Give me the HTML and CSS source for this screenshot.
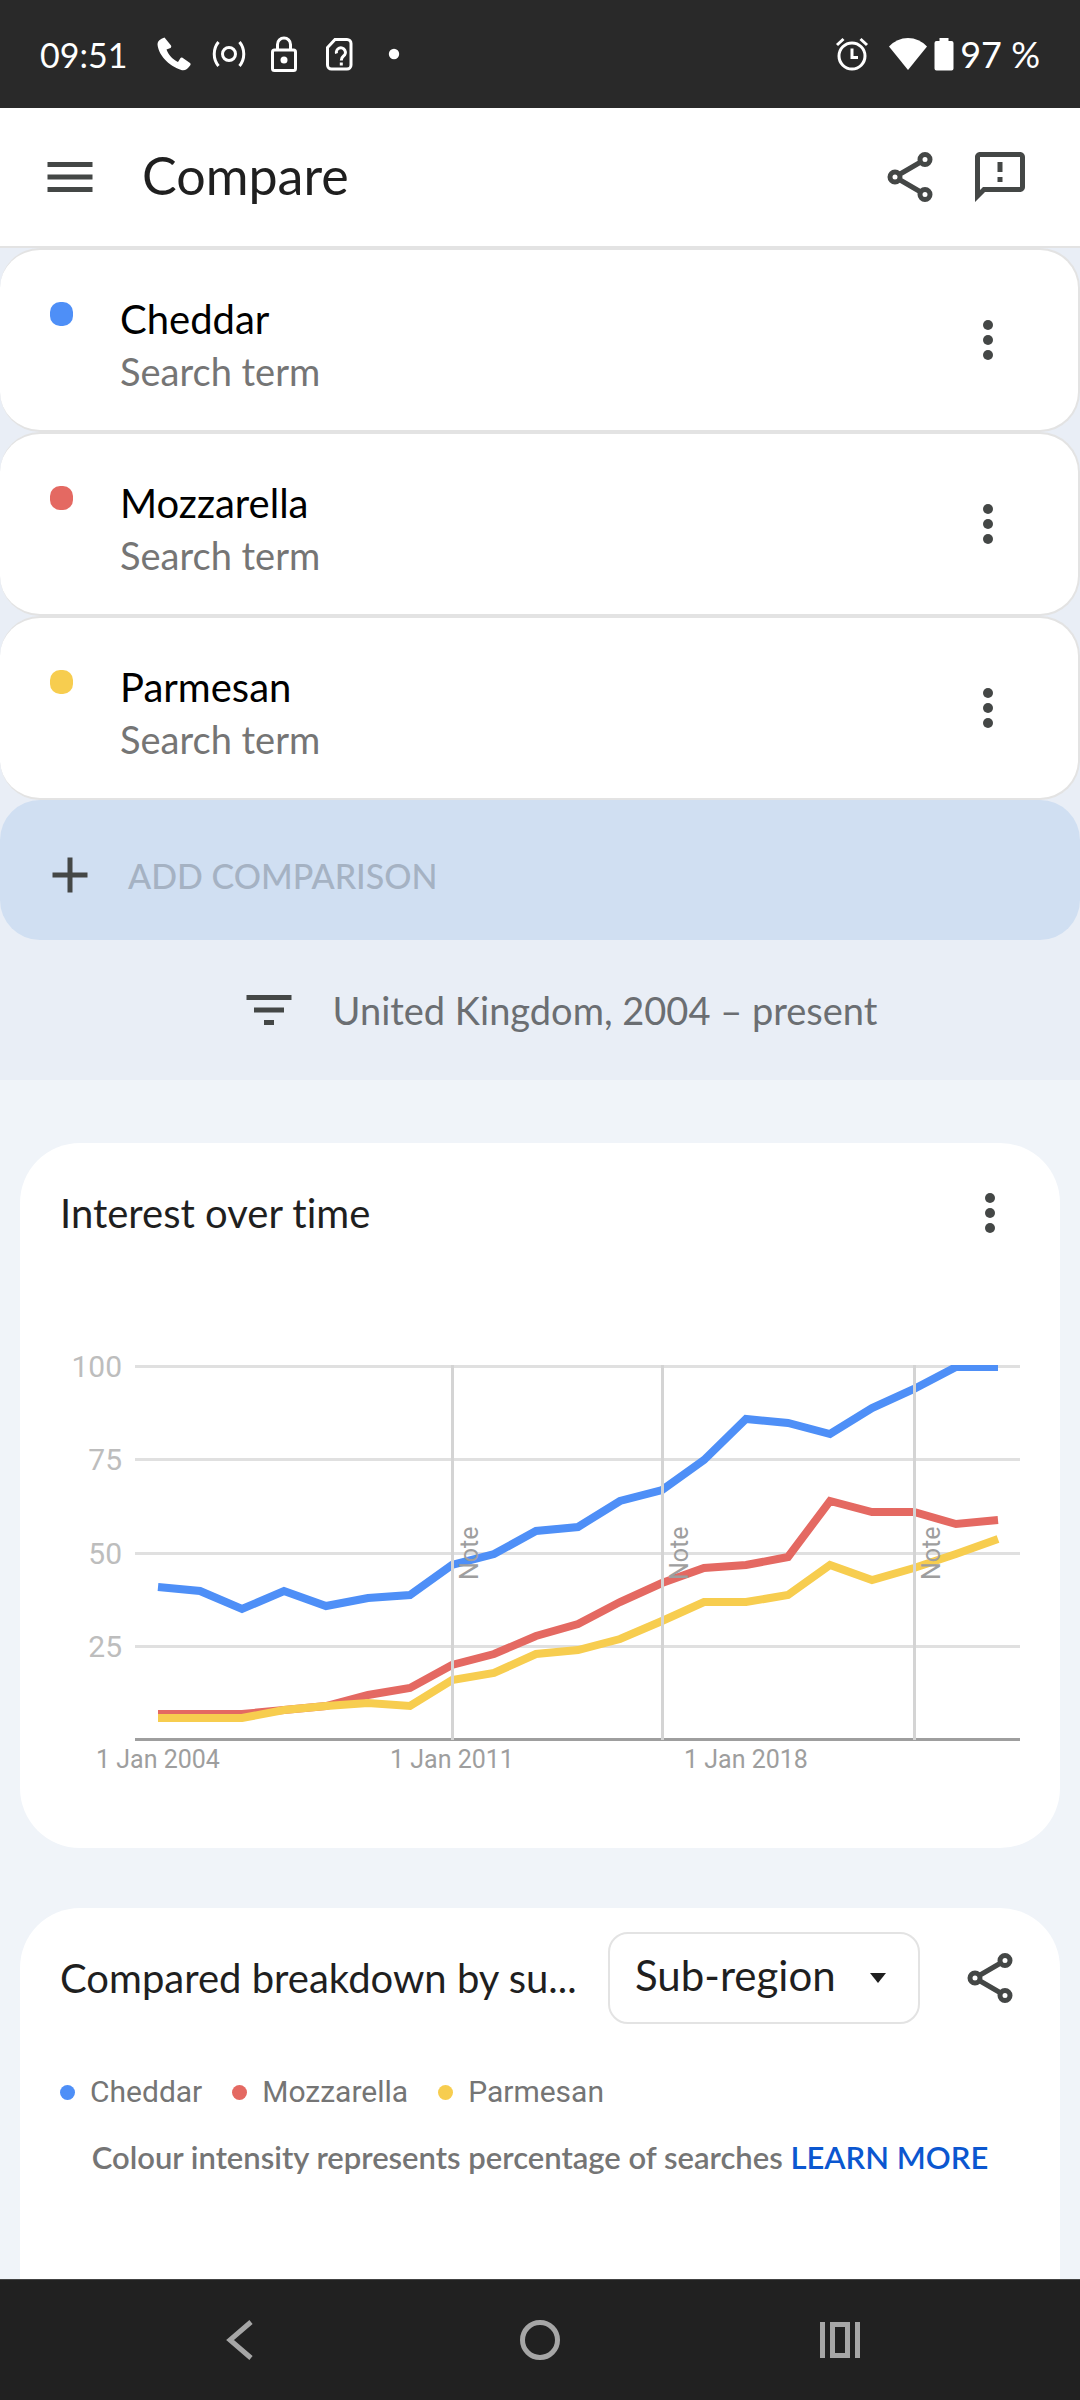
FILE: index.html
```html
<!DOCTYPE html>
<html lang="en-GB">
<head>
<meta charset="utf-8">
<meta name="viewport" content="width=device-width, initial-scale=1">
<title>Compare</title>
<link rel="stylesheet" href="styles.css">
</head>
<body>
<svg class="sprite" aria-hidden="true">
  <symbol id="more" viewBox="0 0 24 24"><circle cx="12" cy="6" r="2"/><circle cx="12" cy="12" r="2"/><circle cx="12" cy="18" r="2"/></symbol>
  <symbol id="share" viewBox="0 0 24 24"><g fill="none" stroke="currentColor" stroke-width="2"><circle cx="18" cy="5" r="2"/><circle cx="6" cy="12" r="2"/><circle cx="18" cy="19" r="2"/><path d="M7.700 11L16.300 6M7.700 13L16.300 18"/></g></symbol>
</svg>

<div class="status">
  <span class="status-time">09:51</span>
  <div class="status-left">
    <svg width="36" height="36" viewBox="0 0 36 36"><path fill="currentColor" d="M8.500 1.500L15 9.500C15.500 10.500 15.300 11.200 14.500 12L10.500 13.500C12.500 19 17 23.500 22 26L24.500 22C25 21.400 25.800 21.300 26.500 21.800L34 27C34.800 27.800 34.700 28.500 34.300 29.200C32 32.500 29 35 26 34.200C12 30 2 18 1.500 8C1.600 5 4 3 8.500 1.500Z"/></svg>
    <svg width="36" height="36" viewBox="0 0 36 36" fill="none" stroke="currentColor" stroke-width="3"><circle cx="18" cy="18" r="6.500"/><path d="M7.500 6A19 19 0 0 0 7.500 30M28.500 6A19 19 0 0 1 28.500 30"/></svg>
    <svg width="36" height="36" viewBox="0 0 36 36" fill="none" stroke="currentColor" stroke-width="3"><rect x="6.500" y="14" width="23" height="20.500" rx="2"/><path d="M11.500 14V8.500A6.500 6.500 0 0 1 24.500 8.500V14"/><circle cx="18" cy="24" r="3.500" fill="currentColor" stroke="none"/></svg>
    <svg width="36" height="36" viewBox="0 0 36 36" fill="none" stroke="currentColor" stroke-width="3"><path d="M14 3.500H26A4 4 0 0 1 30 7.500V29A4 4 0 0 1 26 33H10.500A4 4 0 0 1 6.500 29V11.500Z"/><path d="M15.500 17.500A4.500 4.500 0 1 1 22.500 20C20.500 21.500 20.300 22 20.300 24.500M20.300 26.500V29.500"/></svg>
    <svg width="36" height="36" viewBox="0 0 36 36"><circle cx="18" cy="18" r="5.200" fill="currentColor"/></svg>
  </div>
  <div class="status-right">
    <svg class="alarm" width="36" height="36" viewBox="0 0 36 36" fill="none" stroke="currentColor" stroke-width="3"><circle cx="18" cy="20" r="13"/><path d="M18 12.500V21.500H24M3 9L9.500 3M33 9L26.500 3"/></svg>
    <svg width="40" height="36" viewBox="0 0 40 36"><path fill="currentColor" d="M20 34L1 10.500Q9 2 20 2T39 10.500Z"/></svg>
    <svg width="20" height="36" viewBox="0 0 20 36"><path fill="currentColor" d="M5.500 2H14.500V5H17.500Q19.500 5 19.500 7V32.500Q19.500 34.500 17.500 34.500H2.500Q.5 34.500 .5 32.500V7Q.5 5 2.500 5H5.500Z"/></svg>
    <span>97 %</span>
  </div>
</div>

<header class="appbar">
  <button class="icon-button" aria-label="Menu"><svg class="icon" viewBox="0 0 24 24"><path d="M3 6H21V8H3ZM3 11H21V13H3ZM3 16H21V18H3Z"/></svg></button>
  <h1 class="appbar-title">Compare</h1>
  <button class="icon-button" aria-label="Share"><svg class="icon"><use href="#share"/></svg></button>
  <button class="icon-button" aria-label="Send feedback"><svg class="icon" viewBox="0 0 24 24"><path d="M20 2H4C2.900 2 2 2.900 2 4V22L6 18H20C21.100 18 22 17.100 22 16V4C22 2.900 21.100 2 20 2ZM20 16H5.200L4 17.200V4H20ZM11 12H13V14H11ZM11 6H13V10H11Z"/></svg></button>
</header>

<main class="page">
  <section class="terms">
    <div class="term">
      <span class="swatch blue"></span>
      <div class="term-text"><div class="term-name">Cheddar</div><div class="term-kind">Search term</div></div>
      <button class="icon-button" aria-label="Options for Cheddar"><svg class="icon"><use href="#more"/></svg></button>
    </div>
    <div class="term">
      <span class="swatch red"></span>
      <div class="term-text"><div class="term-name">Mozzarella</div><div class="term-kind">Search term</div></div>
      <button class="icon-button" aria-label="Options for Mozzarella"><svg class="icon"><use href="#more"/></svg></button>
    </div>
    <div class="term">
      <span class="swatch yellow"></span>
      <div class="term-text"><div class="term-name">Parmesan</div><div class="term-kind">Search term</div></div>
      <button class="icon-button" aria-label="Options for Parmesan"><svg class="icon"><use href="#more"/></svg></button>
    </div>
    <button class="add"><svg class="icon" viewBox="0 0 24 24"><path d="M11 5H13V11H19V13H13V19H11V13H5V11H11Z"/></svg><span>ADD COMPARISON</span></button>
    <button class="filters"><svg class="icon" viewBox="0 0 24 24"><path d="M3 6H21V8H3ZM6 11H18V13H6ZM10 16H14V18H10Z"/></svg><span>United Kingdom, 2004 – present</span></button>
  </section>

  <section class="cards">
    <article class="card">
      <div class="card-head">
        <h2 class="card-title">Interest over time</h2>
        <button class="icon-button" aria-label="Chart options"><svg class="icon"><use href="#more"/></svg></button>
      </div>
      <svg class="chart" viewBox="0 0 960 450" role="img" aria-label="Interest over time">
        <clipPath id="plot"><rect x="75" y="25" width="885" height="376"/></clipPath>
        <path class="grid" d="M75 26.500H960M75 119.500H960M75 213.500H960M75 306.500H960"/>
        <path class="axis" d="M75 399.500H960"/>
        <g class="y-labels"><text x="62" y="37">100</text><text x="62" y="130">75</text><text x="62" y="224">50</text><text x="62" y="317">25</text></g>
        <g class="lines" clip-path="url(#plot)">
          <polyline stroke="#4e8ff7" points="98,247 140,251 182,269 224,251 266,266 308,258 350,255 392,225 434,214 476,191 518,187 560,161 602,150 644,120 686,79 728,83 770,94 812,68 854,49 896,27 938,27"/>
          <polyline stroke="#e46962" points="98,374 140,374 182,374 224,370 266,366 308,355 350,348 392,325 434,314 476,296 518,284 560,262 602,243 644,228 686,225 728,217 770,161 812,172 854,172 896,184 938,180"/>
          <polyline stroke="#f7cd4f" points="98,378 140,378 182,378 224,370 266,366 308,363 350,366 392,340 434,333 476,314 518,310 560,299 602,281 644,262 686,262 728,255 770,225 812,240 854,228 896,214 938,199"/>
        </g>
        <path class="marker" d="M392.500 25V400M602.500 25V400M854.500 25V400"/>
        <g class="notes"><text transform="translate(418 240) rotate(-90)">Note</text><text transform="translate(628 240) rotate(-90)">Note</text><text transform="translate(880 240) rotate(-90)">Note</text></g>
        <g class="x-labels"><text x="98" y="428">1 Jan 2004</text><text x="392" y="428">1 Jan 2011</text><text x="686" y="428">1 Jan 2018</text></g>
      </svg>
    </article>

    <article class="card card-last">
      <div class="card-head">
        <h2 class="card-title">Compared breakdown by su...</h2>
        <div class="picker">
          <select class="picker-select" aria-label="Resolution"><option>Sub-region</option></select>
          <svg class="picker-caret" width="18" height="10" viewBox="0 0 18 10"><path d="M1 0H17L9 10Z"/></svg>
        </div>
        <button class="icon-button" aria-label="Share"><svg class="icon"><use href="#share"/></svg></button>
      </div>
      <ul class="legend">
        <li><span class="dot blue"></span>Cheddar</li>
        <li><span class="dot red"></span>Mozzarella</li>
        <li><span class="dot yellow"></span>Parmesan</li>
      </ul>
      <p class="hint">Colour intensity represents percentage of searches <a href="#learn">LEARN MORE</a></p>
    </article>
  </section>
</main>

<nav class="navbar">
  <button aria-label="Back"><svg width="40" height="40" viewBox="0 0 40 40"><path d="M31 2L10 20L31 38"/></svg></button>
  <button aria-label="Home"><svg width="40" height="40" viewBox="0 0 40 40"><circle cx="20" cy="20" r="17.500"/></svg></button>
  <button aria-label="Recent apps"><svg width="40" height="40" viewBox="0 0 40 40"><path d="M2.500 2V38M37.500 2V38M12.500 4.500H27.500V35.500H12.500Z"/></svg></button>
</nav>
</body>
</html>
```
FILE: styles.css
```css
* { box-sizing: border-box; }

body {
  margin: 0;
  min-height: 100vh;
  display: flex;
  flex-direction: column;
  background: #f0f4f9;
  color: #1f1f1f;
  font-family: Lato, "Liberation Sans", sans-serif;
  font-size: 40px;
  font-variant-ligatures: none;
}

h1, h2, p, ul { margin: 0; padding: 0; font-weight: 400; }

button {
  margin: 0;
  padding: 0;
  border: 0;
  background: none;
  color: inherit;
  font: inherit;
}

.sprite { position: absolute; width: 0; height: 0; }

.icon-button { display: flex; flex: none; }
.icon { display: block; width: 60px; height: 60px; flex: none; color: #444746; fill: #444746; }

.blue { background: #4e8ff7; }
.red { background: #e46962; }
.yellow { background: #f7cd4f; }

/* status bar */
.status {
  display: flex;
  align-items: center;
  height: 108px;
  padding: 0 40px;
  background: #292929;
  color: #fff;
  font-size: 36px;
}
.status svg { display: block; }
.status-time { width: 116px; font-size: 34px; }
.status-left { display: flex; gap: 19px; }
.status-right { display: flex; align-items: center; gap: 6px; margin-left: auto; }
.alarm { margin-right: 12px; }

/* app bar */
.appbar {
  display: flex;
  align-items: center;
  gap: 30px;
  height: 140px;
  padding: 0 50px 0 40px;
  background: #fff;
  border-bottom: 2px solid #e3e3e3;
}
.appbar-title { flex: 1; padding: 0 0 4px 12px; font-size: 52px; }

.page { flex: 1; display: flex; flex-direction: column; }

/* compared terms */
.terms { background: #e9eef6; }
.term {
  display: flex;
  align-items: center;
  height: 184px;
  padding: 0 60px 0 50px;
  background: #fff;
  border: 2px solid #e3e3e3;
  border-left: 0;
  border-radius: 40px;
}
.swatch { width: 23px; height: 24px; border-radius: 10px; align-self: flex-start; margin-top: 52px; }
.term-text { flex: 1; margin-left: 47px; padding-top: 10px; line-height: 52px; }
.term-name { color: #000; }
.term-kind { color: #757575; font-size: 38px; }

.add {
  display: flex;
  align-items: center;
  gap: 28px;
  width: 100%;
  height: 140px;
  padding: 10px 40px 0;
  border-radius: 40px;
  background: #d0dff2;
  color: #a5b2c3;
  font-size: 34px;
  font-weight: 500;
}
.filters {
  display: flex;
  align-items: center;
  justify-content: center;
  gap: 34px;
  width: 100%;
  height: 140px;
  padding-left: 36px;
  color: #6b6e72;
  font-size: 38px;
}

/* cards */
.cards {
  flex: 1;
  display: flex;
  flex-direction: column;
  gap: 60px;
  padding: 63px 20px 0;
}
.card { padding: 0 40px 58px; background: #fff; border-radius: 60px; }
.card-last { flex: 1; border-radius: 60px 60px 0 0; }
.card-head { display: flex; align-items: center; height: 140px; }
.card-title { flex: 1; min-width: 0; font-size: 40px; white-space: nowrap; }

.chart {
  display: block;
  width: 100%;
  margin-top: 57px;
  font-family: Roboto, sans-serif;
  font-size: 25px;
  fill: #9e9e9e;
}
.grid { stroke: #e0e0e0; stroke-width: 3; }
.axis { stroke: #9e9e9e; stroke-width: 3; }
.marker { stroke: #d4d4d4; stroke-width: 3; }
.lines { fill: none; stroke-width: 8; }
.y-labels { font-size: 30px; text-anchor: end; fill: #bdbdbd; }
.x-labels { text-anchor: middle; }

.picker { display: grid; align-items: center; flex: none; width: 312px; margin-right: 40px; }
.picker-select {
  grid-area: 1 / 1;
  appearance: none;
  width: 100%;
  height: 92px;
  padding: 0 70px 6px 25px;
  border: 2px solid #e3e3e3;
  border-radius: 20px;
  background: #fff;
  color: #1f1f1f;
  font: inherit;
  font-size: 42px;
}
.picker-caret { grid-area: 1 / 1; justify-self: end; margin-right: 33px; fill: #1f1f1f; pointer-events: none; }

.legend {
  display: flex;
  gap: 30px;
  margin-top: 24px;
  list-style: none;
  font: 30px/40px Roboto, sans-serif;
  color: #757575;
}
.legend li { display: flex; align-items: center; gap: 15px; }
.dot { width: 15px; height: 15px; border-radius: 50%; }

.hint {
  margin-top: 27px;
  text-align: center;
  color: #757575;
  font-size: 31px;
  line-height: 36px;
  font-weight: 600;
}
.hint a { color: #0b57d0; text-decoration: none; }

/* system navigation */
.navbar {
  display: grid;
  grid-template-columns: repeat(3, 300px);
  justify-content: center;
  height: 121px;
  background: #212121;
  border-top: 1px solid #444;
}
.navbar button { display: grid; place-items: center; }
.navbar svg { fill: none; stroke: #a6a6a6; stroke-width: 5; }
```
